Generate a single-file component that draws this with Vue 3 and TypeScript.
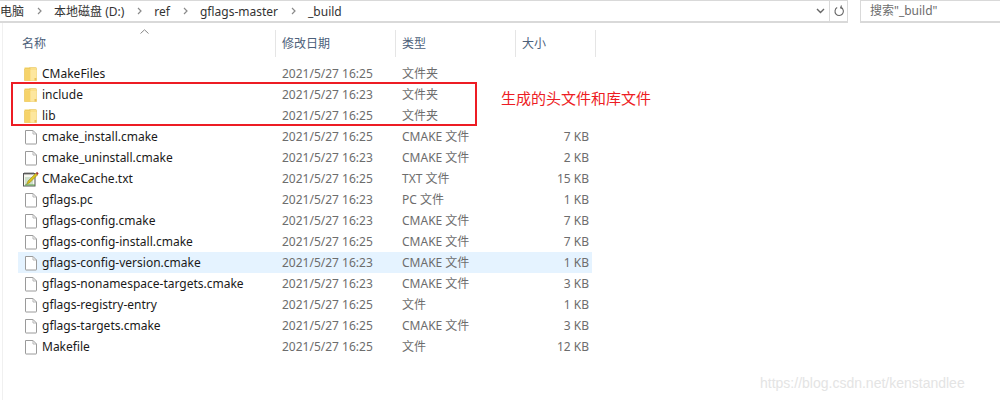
<script setup lang="ts">
interface FileRow {
  name: string;
  date: string;
  type: string;
  size: string;
  icon: 'folder' | 'file' | 'notes';
  hover?: boolean;
}

const crumbs = ['本地磁盘 (D:)', 'ref', 'gflags-master', '_build'];

const rows: FileRow[] = [
  { name: 'CMakeFiles', date: '2021/5/27 16:25', type: '文件夹', size: '', icon: 'folder' },
  { name: 'include', date: '2021/5/27 16:23', type: '文件夹', size: '', icon: 'folder' },
  { name: 'lib', date: '2021/5/27 16:25', type: '文件夹', size: '', icon: 'folder' },
  { name: 'cmake_install.cmake', date: '2021/5/27 16:25', type: 'CMAKE 文件', size: '7 KB', icon: 'file' },
  { name: 'cmake_uninstall.cmake', date: '2021/5/27 16:23', type: 'CMAKE 文件', size: '2 KB', icon: 'file' },
  { name: 'CMakeCache.txt', date: '2021/5/27 16:25', type: 'TXT 文件', size: '15 KB', icon: 'notes' },
  { name: 'gflags.pc', date: '2021/5/27 16:23', type: 'PC 文件', size: '1 KB', icon: 'file' },
  { name: 'gflags-config.cmake', date: '2021/5/27 16:23', type: 'CMAKE 文件', size: '7 KB', icon: 'file' },
  { name: 'gflags-config-install.cmake', date: '2021/5/27 16:25', type: 'CMAKE 文件', size: '7 KB', icon: 'file' },
  { name: 'gflags-config-version.cmake', date: '2021/5/27 16:23', type: 'CMAKE 文件', size: '1 KB', icon: 'file', hover: true },
  { name: 'gflags-nonamespace-targets.cmake', date: '2021/5/27 16:23', type: 'CMAKE 文件', size: '3 KB', icon: 'file' },
  { name: 'gflags-registry-entry', date: '2021/5/27 16:25', type: '文件', size: '1 KB', icon: 'file' },
  { name: 'gflags-targets.cmake', date: '2021/5/27 16:25', type: 'CMAKE 文件', size: '3 KB', icon: 'file' },
  { name: 'Makefile', date: '2021/5/27 16:25', type: '文件', size: '12 KB', icon: 'file' },
];
</script>

<template>
  <div class="window">
    <!-- address bar -->
    <div class="topbar">
      <div class="address">
        <span class="crumb first">此电脑</span>
        <template v-for="c in crumbs" :key="c">
          <svg class="sep" width="5" height="8" viewBox="0 0 5 8" fill="none" stroke="#8a8a8a" stroke-width="1.2">
            <polyline points="1 1 4 4 1 7" />
          </svg>
          <span class="crumb">{{ c }}</span>
        </template>
        <svg class="chev" width="9" height="6" viewBox="0 0 9 6" fill="none" stroke="#666" stroke-width="1.4">
          <polyline points="1 1 4.5 4.5 8 1" />
        </svg>
        <div class="refresh">
          <svg width="12" height="12" viewBox="0 0 12 12" fill="none" stroke="#666" stroke-width="1.1">
            <path d="M4.2 2.6 A4.2 4.2 0 1 0 8 2.5" />
            <polyline points="4.5 0.5 3.6 2.8 6 3.6" transform="translate(4 0)" />
          </svg>
        </div>
      </div>
      <div class="search">搜索"_build"</div>
    </div>

    <div class="pane">
      <!-- column headers -->
      <div class="header">
        <svg class="sort" width="9" height="5" viewBox="0 0 9 5" fill="none" stroke="#888" stroke-width="1">
          <polyline points="0.5 4.5 4.5 0.8 8.5 4.5" />
        </svg>
        <div class="h name">名称</div>
        <div class="h date">修改日期</div>
        <div class="h type">类型</div>
        <div class="h size">大小</div>
      </div>

      <!-- file list -->
      <div class="list">
        <div v-for="r in rows" :key="r.name" class="row" :class="{ hover: r.hover }">
          <div class="cell-name">
            <svg v-if="r.icon === 'folder'" class="ic" width="16" height="16" viewBox="0 0 16 16">
              <path d="M1.5 1.5h5l1 1.5h0V14.5h-6z" fill="#f2d160" />
              <path d="M6.5 1.5h6.2a.8.8 0 0 1 .8.8V14.5h-12V3h6z" fill="#fbe08a" stroke="#e8c45c" stroke-width=".6" />
              <path d="M2 3.5h5.5v11H2z" fill="#f6d36a" />
              <path d="M7.5 4h6v10.5h-6z" fill="#fde79f" />
              <path d="M11.5 12h2v2.5h-2z" fill="#e9c25a" />
            </svg>
            <svg v-else-if="r.icon === 'notes'" class="ic notes" width="16" height="16" viewBox="0 0 16 16">
              <rect x="0.5" y="2.5" width="11.5" height="12.5" fill="#f6f6ee" stroke="#555" />
              <path d="M2 1v3M4 1v3M6 1v3M8 1v3M10 1v3" stroke="#666" stroke-width=".8" />
              <path d="M2 7h8M2 9h8M2 11h8M2 13h8" stroke="#9cc2a0" stroke-width=".9" />
              <path d="M3.5 13.5 L5 10 L12.5 2.5 L14.5 4 L7 11.5z" fill="#d8c21e" stroke="#8b7d12" stroke-width=".5" />
              <path d="M12.8 2.2 L14 .8 L15.6 2.4 L14.5 4z" fill="#a8352a" />
              <path d="M2 14h10" stroke="#5ba04a" stroke-width="1" />
            </svg>
            <svg v-else class="ic" width="16" height="16" viewBox="0 0 16 16" fill="#fff" stroke="#9a9a9a">
              <path d="M2.5 1.5h7.5l3.5 3.5v9.5a.5.5 0 0 1-.5.5H3a.5.5 0 0 1-.5-.5z" />
              <path d="M10 1.5v3.5h3.5" fill="none" stroke="#b5b5b5" />
            </svg>
            <span class="fname">{{ r.name }}</span>
          </div>
          <div class="cell date">{{ r.date }}</div>
          <div class="cell type">{{ r.type }}</div>
          <div class="cell size">{{ r.size }}</div>
        </div>
      </div>

      <!-- annotation drawn over the list -->
      <div class="redbox"></div>
      <div class="note">生成的头文件和库文件</div>
    </div>

    <div class="watermark">https://blog.csdn.net/kenstandlee</div>
  </div>
</template>

<style scoped>
.window {
  position: relative;
  width: 1000px;
  height: 400px;
  overflow: hidden;
  background: #fff;
  font-family: "Noto Sans", "Noto Sans CJK SC", sans-serif;
  font-size: 12px;
  color: #1a1a1a;
}

.topbar {
  display: flex;
  height: 23px;
}
.address {
  width: 848px;
  display: flex;
  align-items: center;
  border: 1px solid #d9d9d9;
  border-width: 1px 1px 2px 0;
  box-sizing: border-box;
  overflow: hidden;
  color: #333;
}
.crumb {
  white-space: nowrap;
}
.crumb.first {
  margin-left: -12px;
}
.sep {
  margin: 0 12px 0 13px;
  flex: none;
}
.chev {
  margin-left: auto;
  margin-right: 4px;
}
.refresh {
  width: 17px;
  height: 100%;
  border-left: 1px solid #d9d9d9;
  display: flex;
  align-items: center;
  justify-content: center;
}
.search {
  margin-left: 12px;
  flex: 1;
  border-left: 1px solid #d9d9d9;
  border-bottom: 2px solid #d9d9d9;
  border-top: 1px solid #d9d9d9;
  padding-left: 9px;
  line-height: 20px;
  color: #6d6d6d;
}

.pane {
  position: relative;
  margin-left: 2px;
  height: 377px;
  border-left: 1px solid #f0f0f0;
  padding-top: 7px;
  box-sizing: border-box;
}

.header {
  position: relative;
  display: flex;
  height: 27px;
  margin-bottom: 6px;
}
.sort {
  position: absolute;
  left: 137px;
  top: -1px;
}
.h {
  box-sizing: border-box;
  line-height: 27px;
  padding-left: 6px;
  color: #4c607a;
  border-right: 1px solid #e5e5e5;
  flex: none;
}
.h.name {
  width: 273px;
  padding-left: 19px;
}
.h.date,
.h.type {
  width: 120px;
}
.h.size {
  width: 80px;
}

.list {
  margin-left: 15px;
  width: 574px;
}
.row {
  display: flex;
  height: 21px;
  line-height: 21px;
  color: #6d6d6d;
}
.row.hover {
  background: #e5f3ff;
}
.cell-name {
  width: 258px;
  flex: none;
  display: flex;
  align-items: center;
  color: #1a1a1a;
}
.ic {
  flex: none;
  margin-left: 5px;
  margin-right: 3px;
}
.notes {
  margin-left: 5px;
}
.fname {
  white-space: nowrap;
}
.cell {
  flex: none;
  box-sizing: border-box;
}
.cell.date {
  width: 120px;
  padding-left: 6px;
}
.cell.type {
  width: 120px;
  padding-left: 6px;
}
.cell.size {
  width: 73px;
  text-align: right;
}

.redbox {
  position: absolute;
  left: 8px;
  top: 59px;
  width: 466px;
  height: 44px;
  box-sizing: border-box;
  border: 2px solid #ed1c24;
}
.note {
  position: absolute;
  left: 498px;
  top: 64px;
  font-size: 15px;
  line-height: 22px;
  color: #ed1c24;
}

.watermark {
  position: absolute;
  left: 760px;
  top: 374px;
  font-family: "Liberation Sans", sans-serif;
  font-size: 14px;
  line-height: 18px;
  color: #e4e4e4;
}
</style>

<style>
html,
body {
  margin: 0;
  background: #fff;
}
</style>
